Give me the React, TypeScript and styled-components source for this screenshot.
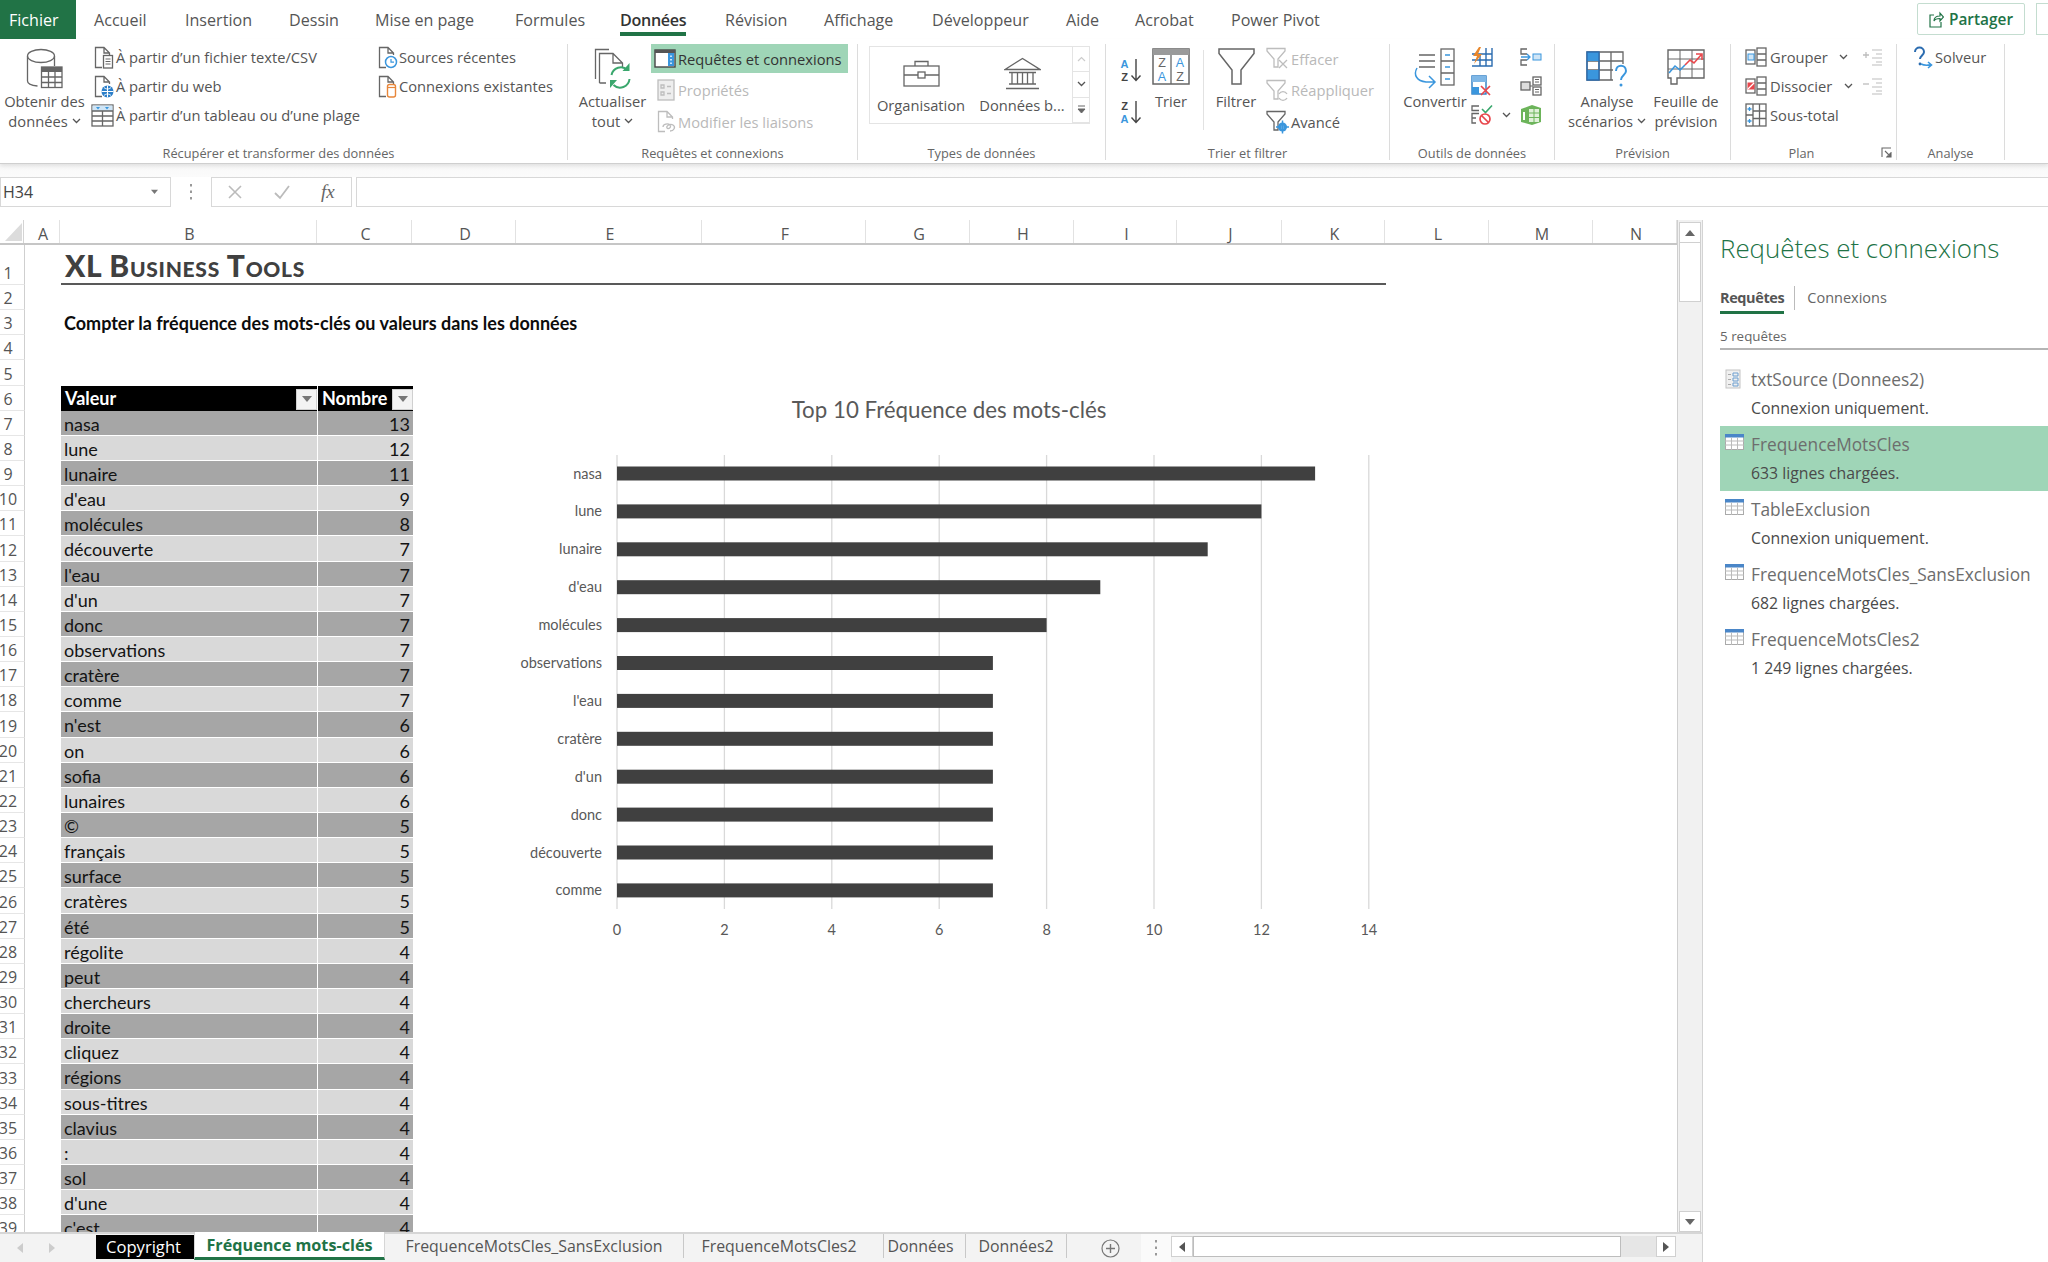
import React from 'react';
import styled, { createGlobalStyle } from 'styled-components';

const UI = '"Open Sans", "Noto Sans", "Liberation Sans", sans-serif';
const SHEET = 'Lato, "Liberation Sans", sans-serif';
const GREEN = '#217346';
const INK = '#666';
const DIM = '#bdbdbd';
const BLUE = '#3a96dd';
const RED = '#e8474c';

const GlobalStyle = createGlobalStyle`
  html, body { margin: 0; padding: 0; background: #fff; }
  * { box-sizing: border-box; }
`;

const Page = styled.div`
  width: 2048px;
  height: 1262px;
  overflow: hidden;
  display: flex;
  flex-direction: column;
  font-family: ${UI};
  color: #444;
  background: #fff;
`;

/* ---------- menu tabs ---------- */

const TabBar = styled.div`
  height: 39px;
  display: flex;
  align-items: flex-start;
  font-size: 16.1px;
  color: #555;
`;

const FileTab = styled.div`
  width: 76px;
  height: 39px;
  margin-right: 18px;
  padding-left: 9px;
  background: ${GREEN};
  color: #fff;
  display: flex;
  align-items: center;
`;

const Tab = styled.div<{ $w: number }>`
  width: ${p => p.$w}px;
  flex-shrink: 0;
`;

const TabLabel = styled.span<{ $active?: boolean }>`
  display: inline-block;
  height: 36px;
  line-height: 40px;
  white-space: nowrap;
  color: ${p => (p.$active ? '#333' : '#555')};
  font-weight: ${p => (p.$active ? 600 : 400)};
  letter-spacing: ${p => (p.$active ? '-0.3px' : '0')};
  border-bottom: 4px solid ${p => (p.$active ? GREEN : 'transparent')};
`;

const ShareButton = styled.div`
  margin: 3px 0 0 auto;
  width: 108px;
  height: 32px;
  border: 1px solid #c4ddd0;
  border-radius: 2px;
  display: flex;
  align-items: center;
  justify-content: center;
  gap: 5px;
  font-weight: 600;
  font-size: 15.4px;
  color: ${GREEN};
`;

const ExtraButton = styled.div`
  margin: 3px -4px 0 11px;
  width: 16px;
  height: 32px;
  flex-shrink: 0;
  border: 1px solid #c4ddd0;
`;

/* ---------- ribbon ---------- */

const Ribbon = styled.div`
  height: 124px;
  padding: 5px 0 3px;
  display: flex;
  background: #fff;
  box-shadow: 0 1px 0 #cfcfcf, 0 3px 4px rgba(0, 0, 0, 0.1);
  position: relative;
  font-size: 14.7px;
  color: #555;
`;

const Group = styled.section<{ $w: number }>`
  width: ${p => p.$w}px;
  flex-shrink: 0;
  display: flex;
  flex-direction: column;
  border-right: 1px solid #dcdcdc;
  position: relative;
`;

const GroupBody = styled.div<{ $pl?: number }>`
  flex: 1;
  display: flex;
  padding-left: ${p => p.$pl ?? 0}px;
  min-height: 0;
`;

const GroupFoot = styled.div<{ $pr?: number }>`
  height: 14px;
  line-height: 14px;
  text-align: center;
  font-size: 12.8px;
  color: #666;
  padding-right: ${p => p.$pr ?? 0}px;
  white-space: nowrap;
`;

const Launcher = styled.span`
  position: absolute;
  right: 4px;
  bottom: 2px;
  display: flex;
`;

const BigButton = styled.div<{ $w: number; $ml?: number }>`
  width: ${p => p.$w}px;
  margin-left: ${p => p.$ml ?? 0}px;
  flex-shrink: 0;
  display: flex;
  flex-direction: column;
  align-items: center;
  line-height: 20px;
  white-space: nowrap;
  text-align: center;
`;

const BigIcon = styled.div<{ $pt?: number }>`
  height: 47px;
  padding-top: ${p => p.$pt ?? 4}px;
  display: flex;
  justify-content: center;
`;

const ButtonLine = styled.div`
  display: flex;
  align-items: center;
  gap: 4px;
`;

const SmallColumn = styled.div<{ $w?: number; $gap?: number; $ml?: number; $mt?: number }>`
  ${p => (p.$w ? `width: ${p.$w}px;` : '')}
  flex-shrink: 0;
  margin-left: ${p => p.$ml ?? 0}px;
  margin-top: ${p => p.$mt ?? 0}px;
  display: flex;
  flex-direction: column;
  gap: ${p => p.$gap ?? 0}px;
`;

const SmallButton = styled.div<{ $on?: boolean; $off?: boolean }>`
  height: 29px;
  display: flex;
  align-items: center;
  white-space: nowrap;
  background: ${p => (p.$on ? '#9fd5b7' : 'transparent')};
  color: ${p => (p.$on ? '#333' : p.$off ? '#b9b9b9' : '#555')};
`;

const IconSlot = styled.span<{ $w: number; $pl?: number }>`
  width: ${p => p.$w}px;
  padding-left: ${p => p.$pl ?? 0}px;
  flex-shrink: 0;
  display: flex;
  align-items: center;
`;

const Gallery = styled.div`
  width: 221px;
  height: 78px;
  margin-top: 2px;
  display: flex;
  border: 1px solid #e4e4e4;
  border-right: none;
`;

const GalleryItem = styled.div<{ $w: number }>`
  width: ${p => p.$w}px;
  display: flex;
  flex-direction: column;
  align-items: center;
  white-space: nowrap;
`;

const GalleryIcon = styled.div`
  height: 48px;
  display: flex;
  align-items: center;
  padding-top: 5px;
`;

const GalleryScroll = styled.div`
  width: 18px;
  margin-left: auto;
  display: flex;
  flex-direction: column;
`;

const GalleryArrow = styled.div`
  flex: 1;
  display: flex;
  align-items: center;
  justify-content: center;
  border: 1px solid #e4e4e4;
  border-width: 0 1px 1px 1px;
`;

const SortColumn = styled.div`
  width: 24px;
  padding-top: 14px;
  display: flex;
  flex-direction: column;
  gap: 17px;
`;

const ToolDivider = styled.div`
  width: 1px;
  height: 80px;
  margin: 6px 5px 0 7px;
  background: #e2e2e2;
  flex-shrink: 0;
`;

const IconColumn = styled.div<{ $ml: number; $w: number }>`
  width: ${p => p.$w}px;
  margin-left: ${p => p.$ml}px;
  margin-top: -2px;
  flex-shrink: 0;
  display: flex;
  flex-direction: column;
`;

const IconCell = styled.div`
  height: 29px;
  display: flex;
  align-items: center;
  gap: 9px;
`;

/* ---------- formula bar ---------- */

const FormulaArea = styled.div`
  height: 57px;
  padding: 14px 0 13px;
  display: flex;
  background: linear-gradient(#f8f8f8 0, #fbfbfb 14px, #fff 14px);
`;

const NameBox = styled.div`
  width: 171px;
  height: 30px;
  border: 1px solid #d8d8d8;
  background: #fff;
  padding: 0 12px 0 2px;
  display: flex;
  align-items: center;
  justify-content: space-between;
  font-size: 16px;
  color: #444;
`;

const FormulaDots = styled.div`
  width: 40px;
  display: flex;
  align-items: center;
  justify-content: center;
`;

const FormulaButtons = styled.div`
  width: 141px;
  height: 30px;
  border: 1px solid #d8d8d8;
  background: #fff;
  padding-left: 15px;
  display: flex;
  align-items: center;
  gap: 30px;
`;

const FxLabel = styled.span`
  font-family: "Liberation Serif", serif;
  font-style: italic;
  font-size: 19px;
  color: #666;
`;

const FormulaInput = styled.div`
  flex: 1;
  height: 30px;
  margin-left: 4px;
  border: 1px solid #d8d8d8;
  border-right: none;
  background: #fff;
`;

/* ---------- sheet ---------- */

const MainArea = styled.div`
  flex: 1;
  display: flex;
  min-height: 0;
`;

const Workbook = styled.div`
  width: 1703px;
  display: flex;
  flex-direction: column;
  border-right: 1px solid #d4d4d4;
`;

const SheetArea = styled.div`
  height: 1012px;
  display: flex;
`;

const GridPane = styled.div`
  width: 1678px;
  position: relative;
  overflow: hidden;
  border-right: 1px solid #cfcfcf;
  font-family: ${SHEET};
`;

const ColumnHeader = styled.div`
  height: 25px;
  display: flex;
  border-bottom: 2px solid #c6c6c6;
  font-family: ${UI};
  font-size: 16px;
  color: #555;
`;

const Corner = styled.div`
  width: 25px;
  display: flex;
  align-items: flex-end;
  padding: 0 0 2px 5px;
  border-right: 1px solid #d4d4d4;
`;

const ColumnCell = styled.div<{ $w: number }>`
  width: ${p => p.$w}px;
  flex-shrink: 0;
  padding-left: 3px;
  border-right: 1px solid #e2e2e2;
  text-align: center;
  line-height: 29px;
`;

const Row = styled.div<{ $h?: number }>`
  height: ${p => p.$h ?? 25.15}px;
  display: flex;
`;

const RowNumber = styled.div`
  width: 25px;
  flex-shrink: 0;
  padding-right: 8px;
  display: flex;
  align-items: flex-end;
  justify-content: center;
  border-right: 1px solid #cfcfcf;
  border-bottom: 1px solid #e6e6e6;
  font-family: ${UI};
  font-size: 16px;
  line-height: 22px;
  color: #555;
`;

const TitleCell = styled.div`
  width: 1325px;
  margin-left: 36px;
  padding: 0 0 0 4px;
  border-bottom: 2px solid #595959;
  font-weight: 900;
  font-variant: small-caps;
  font-size: 30px;
  letter-spacing: 0.7px;
  line-height: 41px;
  color: #404040;
  white-space: nowrap;
`;

const SubTitle = styled.div`
  margin-left: 39px;
  font-weight: 700;
  font-size: 18px;
  line-height: 27px;
  color: #0c0c0c;
  white-space: nowrap;
`;

const TableHead = styled.div<{ $w: number; $ml?: number }>`
  width: ${p => p.$w}px;
  margin-left: ${p => p.$ml ?? 0}px;
  padding-left: 4px;
  display: flex;
  align-items: center;
  justify-content: space-between;
  background: #000;
  color: #fff;
  font-weight: 700;
  font-size: 18px;
  line-height: 27px;
  border-right: 1px solid #fff;
  white-space: nowrap;
`;

const FilterButton = styled.span`
  width: 21px;
  height: 21px;
  margin-top: 2px;
  background: #f3f3f3;
  border: 1px solid #d0d0d0;
  display: flex;
  align-items: center;
  justify-content: center;
`;

const DataCell = styled.div<{ $w: number; $ml?: number; $dark: boolean; $right?: boolean }>`
  width: ${p => p.$w}px;
  margin-left: ${p => p.$ml ?? 0}px;
  padding: 0 3px;
  background: ${p => (p.$dark ? '#a6a6a6' : '#d9d9d9')};
  border-right: 1px solid #fff;
  border-bottom: 1px solid #fff;
  text-align: ${p => (p.$right ? 'right' : 'left')};
  font-size: 18px;
  line-height: 27px;
  color: #141414;
  white-space: nowrap;
`;

const ChartLayer = styled.svg`
  position: absolute;
  left: 480px;
  top: 160px;
  display: block;
`;

const ChartTitle = styled.text`
  font-family: ${SHEET};
  font-size: 22.3px;
  fill: #595959;
`;

const ChartLabel = styled.text`
  font-family: ${SHEET};
  font-size: 14.5px;
  fill: #595959;
`;

const VScroll = styled.div`
  width: 24px;
  padding: 2px 1px 0;
  background: #f1f1f1;
  display: flex;
  flex-direction: column;
`;

const ScrollButton = styled.div`
  height: 21px;
  background: #fff;
  border: 1px solid #d0d0d0;
  display: flex;
  align-items: center;
  justify-content: center;
`;

const VThumb = styled.div`
  height: 59px;
  background: #fff;
  border: 1px solid #d0d0d0;
  border-top: none;
`;

const VTrack = styled.div`
  flex: 1;
`;

/* ---------- sheet tabs ---------- */

const SheetTabs = styled.div`
  height: 30px;
  display: flex;
  align-items: flex-start;
  background: #f3f3f3;
  border-top: 2px solid #d6d6d6;
  font-size: 15.9px;
  color: #555;
`;

const TabNav = styled.div`
  width: 96px;
  height: 28px;
  padding-left: 16px;
  display: flex;
  align-items: center;
  gap: 24px;
`;

const BlackTab = styled.div`
  width: 98px;
  height: 24px;
  margin-top: 1px;
  padding: 0 3px 2px 0;
  background: #000;
  color: #fff;
  font-size: 16.6px;
  display: flex;
  align-items: center;
  justify-content: center;
`;

const ActiveSheetTab = styled.div`
  width: 191px;
  height: 28px;
  margin-top: -2px;
  background: #fff;
  border-bottom: 3px solid ${GREEN};
  border-left: 1px solid #d6d6d6;
  border-right: 1px solid #d6d6d6;
  color: ${GREEN};
  font-weight: 700;
  font-size: 16.2px;
  white-space: nowrap;
  display: flex;
  align-items: center;
  justify-content: center;
`;

const SheetTab = styled.div<{ $w: number; $pr?: number }>`
  width: ${p => p.$w}px;
  height: 24px;
  padding-right: ${p => p.$pr ?? 0}px;
  border-right: 1px solid #c8c8c8;
  display: flex;
  align-items: center;
  justify-content: center;
  white-space: nowrap;
`;

const AddSheet = styled.div`
  margin-left: 34px;
  width: 20px;
  height: 28px;
  display: flex;
  align-items: center;
`;

const ScrollSplit = styled.div`
  width: 30px;
  height: 28px;
  margin-left: 20px;
  background: #fafafa;
  display: flex;
  align-items: center;
  justify-content: center;
`;

const HScroll = styled.div`
  width: 505px;
  height: 21px;
  margin-top: 2px;
  display: flex;
`;

const HButton = styled.div<{ $w: number }>`
  width: ${p => p.$w}px;
  background: #fff;
  border: 1px solid #d0d0d0;
  display: flex;
  align-items: center;
  justify-content: center;
`;

const HThumb = styled.div`
  width: 428px;
  background: #fff;
  border: 1px solid #bdbdbd;
`;

const HTrack = styled.div`
  flex: 1;
  background: #e6e6e6;
`;

/* ---------- query panel ---------- */

const Panel = styled.aside`
  flex: 1;
  padding: 11px 0 0 17px;
  background: #fff;
`;

const PanelTitle = styled.div`
  font-weight: 300;
  font-size: 25.9px;
  line-height: 34px;
  color: ${GREEN};
  white-space: nowrap;
`;

const PanelTabs = styled.div`
  height: 42px;
  margin-top: 19px;
  display: flex;
  font-size: 14.5px;
  color: #666;
`;

const PanelTab = styled.div<{ $active?: boolean }>`
  height: 30px;
  line-height: 28px;
  font-weight: ${p => (p.$active ? 700 : 400)};
  letter-spacing: ${p => (p.$active ? '-0.4px' : '0')};
  color: ${p => (p.$active ? '#555' : '#666')};
  border-bottom: ${p => (p.$active ? `3px solid ${GREEN}` : 'none')};
`;

const PanelTabDivider = styled.div`
  width: 1px;
  height: 24px;
  margin: 2px 12px 0 10px;
  background: #bbb;
`;

const QueryCount = styled.div`
  height: 24px;
  font-size: 13.4px;
  line-height: 20px;
  color: #666;
  border-bottom: 2px solid #b5b5b5;
`;

const QueryList = styled.div`
  margin-top: 11px;
`;

const QueryItem = styled.div<{ $on?: boolean }>`
  height: 65px;
  padding: 5px 0 0 5px;
  display: grid;
  grid-template-columns: 26px 1fr;
  background: ${p => (p.$on ? '#9fd5b7' : 'transparent')};
`;

const QueryIcon = styled.div`
  padding-top: 3px;
`;

const QueryName = styled.div`
  font-size: 17.3px;
  line-height: 28px;
  color: #6d6d6d;
  white-space: nowrap;
`;

const QueryNote = styled.div`
  font-size: 15.8px;
  line-height: 28px;
  color: #4a4a4a;
  white-space: nowrap;
`;

/* ---------- icons ---------- */

const Svg = styled.svg`
  display: block;
  flex-shrink: 0;
`;

const Chevron = ({ color = '#555' }: { color?: string }) => (
  <Svg width="9" height="6" viewBox="0 0 9 6">
    <path d="M1 1l3.5 3.5L8 1" fill="none" stroke={color} strokeWidth="1.3" />
  </Svg>
);

const Triangle = ({ dir, color = '#666', size = 1 }: { dir: 'up' | 'down' | 'left' | 'right'; color?: string; size?: number }) => {
  const d = { up: 'M0 7L5 1L10 7Z', down: 'M0 1H10L5 7Z', left: 'M7 0V10L1 5Z', right: 'M1 0V10L7 5Z' }[dir];
  const flat = dir === 'up' || dir === 'down';
  return (
    <Svg width={(flat ? 10 : 8) * size} height={(flat ? 8 : 10) * size} viewBox={flat ? '0 0 10 8' : '0 0 8 10'}>
      <path d={d} fill={color} />
    </Svg>
  );
};

const VDots = () => (
  <Svg width="4" height="18" viewBox="0 0 4 18">
    <path d="M2 1v2.5M2 7.5v2.5M2 14v2.5" stroke="#999" strokeWidth="2" />
  </Svg>
);

const line = { fill: 'none', stroke: INK, strokeWidth: 1.3 };
const dim = { fill: 'none', stroke: DIM, strokeWidth: 1.3 };

const IconDatabase = () => (
  <Svg width="37" height="41" viewBox="0 0 37 41">
    <g {...line}>
      <ellipse cx="15" cy="8" rx="13.5" ry="6.5" />
      <path d="M1.5 8v25c0 2.5 4 4.5 10 5M28.5 8v10" />
      <rect x="15.5" y="19" width="20.5" height="20.5" fill="#fff" />
      <path d="M22.5 24v15M29 24v15M15.5 29h20.5M15.5 34.5h20.5" />
    </g>
    <rect x="15.5" y="19" width="20.5" height="5" fill={INK} />
  </Svg>
);

const PageShape = ({ s = line }: { s?: typeof line }) => (
  <path d="M8 21.5H1.5V1.5H10l5.5 5.5V9M10 1.5V7h5.5" {...s} />
);

const IconFileText = () => (
  <Svg width="20" height="23" viewBox="0 0 20 23">
    <PageShape />
    <rect x="9.5" y="9.5" width="9" height="12.5" fill="#fff" stroke={INK} strokeWidth="1.3" />
    <path d="M11.5 13h5M11.5 15.5h5M11.5 18h5" {...line} strokeWidth="1" />
  </Svg>
);

const IconFileWeb = () => (
  <Svg width="20" height="23" viewBox="0 0 20 23">
    <PageShape />
    <circle cx="13.5" cy="16.5" r="6" fill="#2c7fc9" />
    <path d="M7.5 16.5h12M13.5 10.5v12M10 12.5c2 2 5 2 7 0M10 20.5c2-2 5-2 7 0" fill="none" stroke="#fff" strokeWidth="1" />
  </Svg>
);

const IconTableRange = () => (
  <Svg width="23" height="23" viewBox="0 0 23 23">
    <rect x="1" y="1" width="21" height="21" {...line} />
    <rect x="1.5" y="1.5" width="20" height="5.5" fill="#cfe5f6" />
    <path d="M5 3h4L7 5.5zM14 3h4l-2 2.5z" fill={BLUE} />
    <path d="M1 7h21M1 12h21M1 17h21M11.5 7v15" {...line} />
  </Svg>
);

const IconFileRecent = () => (
  <Svg width="20" height="23" viewBox="0 0 20 23">
    <PageShape />
    <circle cx="13" cy="16" r="5.5" fill="#fff" stroke={BLUE} strokeWidth="1.5" />
    <path d="M13 13v3.2h3" fill="none" stroke={BLUE} strokeWidth="1.2" />
  </Svg>
);

const IconFileLink = () => (
  <Svg width="20" height="23" viewBox="0 0 20 23">
    <PageShape />
    <rect x="9.5" y="9.5" width="8" height="12.5" rx="2" fill="#fff" stroke="#e8873a" strokeWidth="1.4" />
    <path d="M9.5 12.5h8" stroke="#e8873a" strokeWidth="1.2" />
  </Svg>
);

const IconRefreshAll = () => (
  <Svg width="37" height="41" viewBox="0 0 37 41">
    <path d="M1.5 31V1.5H15M5.5 35V5.5H19l9.5 9.5v4M19 5.5V15h9.5M5.5 35H12" {...line} />
    <g fill="none" stroke="#3aa76d" strokeWidth="2">
      <path d="M17.5 27a9.5 9.5 0 0 1 16-5" />
      <path d="M35.5 31a9.5 9.5 0 0 1-16 6" />
    </g>
    <path d="M35.5 15v8h-7zM16 40v-8h7z" fill="#3aa76d" />
  </Svg>
);

const IconQueryPane = () => (
  <Svg width="22" height="19" viewBox="0 0 22 19">
    <rect x="1" y="1" width="20" height="17" fill="#fff" stroke="#444" strokeWidth="1.4" />
    <rect x="1" y="1" width="20" height="3" fill="#555" />
    <rect x="14" y="4" width="6" height="13" fill={BLUE} />
    <path d="M17 6.5v1.5M17 10v1.5M17 13.5v1.5" stroke="#fff" strokeWidth="1.5" />
  </Svg>
);

const IconProperties = () => (
  <Svg width="18" height="22" viewBox="0 0 18 22">
    <rect x="1" y="1" width="16" height="20" fill="#eee" stroke={DIM} strokeWidth="1.3" />
    <path d="M4 6h3v3H4zM4 13h3v3H4zM10 7.5h4M10 14.5h4" {...dim} />
  </Svg>
);

const IconEditLinks = () => (
  <Svg width="20" height="23" viewBox="0 0 20 23">
    <PageShape s={dim} />
    <path d="M6 17c0-3 5-4 7-2s-2 5-3 3 3-5 6-3 1 6-3 6" {...dim} />
  </Svg>
);

const IconBriefcase = () => (
  <Svg width="37" height="27" viewBox="0 0 37 27">
    <g {...line}>
      <rect x="1" y="6" width="35" height="20" />
      <path d="M12 6V1.5h13V6M1 15h14M22 15h14" />
      <rect x="15" y="12" width="7" height="6" />
    </g>
  </Svg>
);

const IconBank = () => (
  <Svg width="37" height="33" viewBox="0 0 37 33">
    <g {...line}>
      <path d="M1 12.5L18.5 1.5 36 12.5zM5 15.5h27M5 27h27M2 31.5h33" />
      <path d="M8 15.5V27M13.5 15.5V27M18.5 15.5V27M23.5 15.5V27M29 15.5V27" />
    </g>
  </Svg>
);

const glyph = { fontFamily: '"Liberation Sans", sans-serif', textAnchor: 'middle' as const };

const IconSort = ({ top, bottom }: { top: string; bottom: string }) => (
  <Svg width="23" height="25" viewBox="0 0 23 25">
    <text x="5.5" y="10" fontSize="11" fontWeight="700" fill={top === 'A' ? BLUE : '#444'} {...glyph}>{top}</text>
    <text x="5.5" y="22.6" fontSize="11" fontWeight="700" fill={bottom === 'A' ? BLUE : '#444'} {...glyph}>{bottom}</text>
    <path d="M17 1v21M12.5 17.5L17 22.5l4.5-5" fill="none" stroke="#444" strokeWidth="1.4" />
  </Svg>
);

const IconSortDialog = () => (
  <Svg width="38" height="37" viewBox="0 0 38 37">
    <rect x="1" y="1" width="36" height="35" {...line} strokeWidth="1.5" />
    <rect x="1" y="1" width="36" height="6" fill="#9a9a9a" />
    <path d="M19 7v29" {...line} />
    <text x="10" y="18.5" fontSize="12.5" fill="#666" {...glyph}>Z</text>
    <text x="10" y="32.5" fontSize="12.5" fill={BLUE} {...glyph}>A</text>
    <text x="28" y="18.5" fontSize="12.5" fill={BLUE} {...glyph}>A</text>
    <text x="28" y="32.5" fontSize="12.5" fill="#666" {...glyph}>Z</text>
  </Svg>
);

const IconFunnel = () => (
  <Svg width="37" height="37" viewBox="0 0 37 37">
    <path d="M1 1h35v4.5L23 22v14h-9V22L1 5.5z" {...line} strokeWidth="1.5" />
  </Svg>
);

const SmallFunnel = ({ s = dim }: { s?: typeof line }) => (
  <path d="M1 1.5h18v2.5L12 12v8H8V12L1 4z" {...s} />
);

const IconFilterClear = () => (
  <Svg width="24" height="23" viewBox="0 0 24 23">
    <SmallFunnel />
    <path d="M13 13l8 8M21 13l-8 8" {...dim} />
  </Svg>
);

const IconFilterReapply = () => (
  <Svg width="24" height="23" viewBox="0 0 24 23">
    <SmallFunnel />
    <path d="M13 15a4.5 4.5 0 0 1 8 0M21 19a4.5 4.5 0 0 1-8 0" {...dim} />
  </Svg>
);

const IconFilterAdvanced = () => (
  <Svg width="24" height="24" viewBox="0 0 24 24">
    <SmallFunnel s={line} />
    <circle cx="16.5" cy="17" r="4.5" fill={BLUE} />
    <circle cx="16.5" cy="17" r="1.5" fill="#fff" />
    <path d="M16.5 10.5v13M10 17h13" stroke={BLUE} strokeWidth="1.5" />
  </Svg>
);

const IconConvert = () => (
  <Svg width="44" height="42" viewBox="0 0 44 42">
    <path d="M6 7h16M6 13h16M6 19h16" {...line} />
    <rect x="28" y="1" width="13" height="36" {...line} />
    <path d="M28 13h13M28 25h13" {...line} />
    <path d="M32 7h5M32 19h5M32 31h5" stroke={BLUE} strokeWidth="1.6" />
    <path d="M4 20c-4 7 0 13 9 14h8M16 28l6 6-6 6" fill="none" stroke={BLUE} strokeWidth="1.5" />
  </Svg>
);

const IconFlashFill = () => (
  <Svg width="22" height="20" viewBox="0 0 22 20">
    <path d="M1 19h20V1M9 7v12M15 1v18M1 13h20M1 7h20" fill="none" stroke="#2b6cb0" strokeWidth="1.4" />
    <path d="M8 0L2 9h4l-3 8 8-10H7l3-7z" fill="#e8872c" />
  </Svg>
);

const IconRemoveDup = () => (
  <Svg width="22" height="21" viewBox="0 0 22 21">
    <rect x="1" y="1" width="14" height="18" fill="#fff" stroke="#2b7cc4" strokeWidth="1.4" />
    <rect x="1" y="1" width="14" height="6" fill="#7fb7e6" />
    <rect x="1" y="12" width="7" height="7" fill={BLUE} />
    <path d="M10 11l9 9M19 11l-9 9" stroke={RED} strokeWidth="1.7" />
  </Svg>
);

const IconValidate = () => (
  <Svg width="22" height="21" viewBox="0 0 22 21">
    <path d="M8 2H1v4.5h7M8 9.5H1v4.5h4M1 14v5h4" {...line} />
    <path d="M11 5l3.5 3.5L21 1.500" fill="none" stroke="#3aa76d" strokeWidth="1.6" />
    <circle cx="14" cy="15" r="5" fill="#fff" stroke={RED} strokeWidth="1.7" />
    <path d="M10.5 11.5l7 7" stroke={RED} strokeWidth="1.7" />
  </Svg>
);

const IconConsolidate = () => (
  <Svg width="22" height="18" viewBox="0 0 22 18">
    <path d="M7 1H1v5h6M7 12H1v5h6" {...line} />
    <path d="M1 9h9M7 6l3 3-3 3" fill="none" stroke={BLUE} strokeWidth="1.3" />
    <rect x="13" y="6" width="8" height="6" fill="#cfe5f6" stroke={BLUE} />
  </Svg>
);

const IconRelations = () => (
  <Svg width="22" height="20" viewBox="0 0 22 20">
    <rect x="1" y="6" width="9" height="8" fill="#ddd" stroke={INK} strokeWidth="1.3" />
    <rect x="13" y="1" width="8" height="8" {...line} />
    <rect x="13" y="11" width="8" height="8" {...line} />
    <path d="M10 10h3M15 3.5h4M15 6h4M15 13.5h4M15 16h4" {...line} strokeWidth="1" />
  </Svg>
);

const IconPowerPivot = () => (
  <Svg width="22" height="22" viewBox="0 0 22 22">
    <path d="M1 5l11-4 9 3v14l-9 3-11-3z" fill="#6cb45a" />
    <rect x="9" y="5" width="10" height="13" fill="#dff0d8" />
    <path d="M14 5v13M9 9h10M9 13.5h10" stroke="#6cb45a" strokeWidth="1" />
    <path d="M4 8v8" stroke="#fff" strokeWidth="2" />
  </Svg>
);

const IconScenario = () => (
  <Svg width="42" height="37" viewBox="0 0 42 37">
    <path d="M1 1h36v28H1zM13 1v28M25 1v28M1 10h36M1 19h36" {...line} />
    <rect x="1" y="1" width="12" height="9" fill={BLUE} />
    <rect x="1" y="19" width="12" height="10" fill={BLUE} />
    <path d="M1 1h12v28H1z" fill="none" stroke="#2b6cb0" strokeWidth="1.4" />
    <rect x="27" y="13" width="15" height="24" fill="#fff" />
    <path d="M30 20c0-7 10-7 10 0 0 4-5 4-5 9" fill="none" stroke={BLUE} strokeWidth="2" />
    <circle cx="35" cy="34" r="1.5" fill={BLUE} />
  </Svg>
);

const IconForecast = () => (
  <Svg width="38" height="37" viewBox="0 0 38 37">
    <path d="M10 35H4v-6l-3 0V1h36v28H10z" {...line} strokeWidth="1.4" />
    <path d="M1 10h36M1 20h36M13 1v28M25 1v28" {...line} strokeWidth="1" />
    <path d="M2 24l6-7 5 4 5-5" fill="none" stroke={BLUE} strokeWidth="1.6" />
    <path d="M18 16l5-5 4 3 7-8M29 5h6v6" fill="none" stroke={RED} strokeWidth="1.6" />
  </Svg>
);

const Outline = ({ fill, stroke, mark }: { fill: string; stroke: string; mark?: boolean }) => (
  <>
    <rect x="1" y="3" width="9" height="14" {...line} />
    <rect x="3" y="7" width="6" height="6" fill={fill} stroke={stroke} />
    {mark && <path d="M3 13l6-6" stroke="#fff" strokeWidth="1.2" />}
    <rect x="12" y="1" width="9" height="18" {...line} />
    <path d="M12 7h9M12 13h9" {...line} />
  </>
);

const IconGroup = () => (
  <Svg width="22" height="20" viewBox="0 0 22 20">
    <Outline fill="#cfe5f6" stroke={BLUE} />
  </Svg>
);

const IconUngroup = () => (
  <Svg width="22" height="20" viewBox="0 0 22 20">
    <Outline fill={RED} stroke={RED} mark />
  </Svg>
);

const IconSubtotal = () => (
  <Svg width="22" height="24" viewBox="0 0 22 24">
    <rect x="1" y="1" width="20" height="22" {...line} />
    <path d="M8 1v22M14.5 1v22M8 8h13M8 15.5h13M1 12h7" {...line} />
    <path d="M2.5 6h4M4.5 4v4M2.5 18h4M4.5 16v4" stroke={BLUE} strokeWidth="1.3" />
  </Svg>
);

const IconDetail = ({ plus }: { plus?: boolean }) => (
  <Svg width="21" height="18" viewBox="0 0 21 18">
    <path d={plus ? 'M1 7h6M4 4v6' : 'M1 7h6'} {...dim} />
    <path d="M10 2h10M14 6h6M10 10h10M14 14h6M10 17h10" {...dim} strokeWidth="1" />
  </Svg>
);

const IconSolver = () => (
  <Svg width="20" height="23" viewBox="0 0 20 23">
    <path d="M2 6c0-6 9-6 9 0 0 3-4 4-4 7" fill="none" stroke="#2b6cb0" strokeWidth="2" />
    <circle cx="7" cy="18" r="1.4" fill="#2b6cb0" />
    <path d="M8 18c4 2 6 1 10 1M15 16l3.5 3-3.5 3" fill="none" stroke={BLUE} strokeWidth="1.6" />
  </Svg>
);

const IconShare = () => (
  <Svg width="15" height="17" viewBox="0 0 15 17">
    <path d="M5 4H1v12h11v-5M5 10c0-3 2-5 6-5V2l3.5 4-3.5 4V7.5C8 7.5 6 8 5 10z" fill="none" stroke={GREEN} strokeWidth="1.2" />
  </Svg>
);

const IconLauncher = () => (
  <Svg width="11" height="11" viewBox="0 0 11 11">
    <path d="M1 10V1h9M10 5v5H5M4 4l5 5M9 6v3H6" fill="none" stroke="#666" strokeWidth="1.1" />
  </Svg>
);

const IconCross = () => (
  <Svg width="16" height="16" viewBox="0 0 16 16">
    <path d="M2 2l12 12M14 2L2 14" stroke="#bbb" strokeWidth="1.6" />
  </Svg>
);

const IconCheck = () => (
  <Svg width="18" height="16" viewBox="0 0 18 16">
    <path d="M2 9l5 5L16 2" fill="none" stroke="#bbb" strokeWidth="1.8" />
  </Svg>
);

const IconCorner = () => (
  <Svg width="17" height="18" viewBox="0 0 17 18">
    <path d="M17 0V18H0z" fill="#dcdcdc" />
  </Svg>
);

const IconAddSheet = () => (
  <Svg width="19" height="19" viewBox="0 0 19 19">
    <circle cx="9.5" cy="9.5" r="8.5" fill="none" stroke="#777" strokeWidth="1.2" />
    <path d="M5 9.5h9M9.5 5v9" stroke="#777" strokeWidth="1.4" />
  </Svg>
);

const IconConnection = () => (
  <Svg width="16" height="20" viewBox="0 0 16 20">
    <rect x="1" y="1" width="14" height="18" fill="#f0f0f0" stroke="#c4c4c4" />
    <path d="M8 4h5v3H8zM8 9h5v3H8zM8 14h5v3H8z" fill="none" stroke="#6d9fd0" />
    <path d="M3 5.5h3M3 10.5h3M3 15.5h3" stroke="#aaa" />
  </Svg>
);

const IconTable = () => (
  <Svg width="19" height="16" viewBox="0 0 19 16">
    <rect x="0.5" y="0.5" width="18" height="15" fill="#fff" stroke="#aaa" />
    <rect x="0" y="0" width="19" height="3.5" fill="#4a86c8" />
    <path d="M0 7h19M0 11h19M6.5 3.5V16M12.5 3.5V16" stroke="#bbb" />
  </Svg>
);

/* ---------- data ---------- */

const menuTabs: [string, number][] = [
  ['Accueil', 91], ['Insertion', 104], ['Dessin', 86], ['Mise en page', 140], ['Formules', 105],
  ['Données', 105], ['Révision', 99], ['Affichage', 108], ['Développeur', 134], ['Aide', 69],
  ['Acrobat', 96], ['Power Pivot', 120],
];

const columns: [string, number][] = [
  ['A', 36], ['B', 257], ['C', 95], ['D', 104], ['E', 186], ['F', 164], ['G', 104],
  ['H', 104], ['I', 103], ['J', 105], ['K', 103], ['L', 104], ['M', 104], ['N', 84],
];

const rows: [string, number][] = [
  ['nasa', 13], ['lune', 12], ['lunaire', 11], ["d'eau", 9], ['molécules', 8], ['découverte', 7],
  ["l'eau", 7], ["d'un", 7], ['donc', 7], ['observations', 7], ['cratère', 7], ['comme', 7],
  ["n'est", 6], ['on', 6], ['sofia', 6], ['lunaires', 6], ['©', 5], ['français', 5], ['surface', 5],
  ['cratères', 5], ['été', 5], ['régolite', 4], ['peut', 4], ['chercheurs', 4], ['droite', 4],
  ['cliquez', 4], ['régions', 4], ['sous-titres', 4], ['clavius', 4], [':', 4], ['sol', 4],
  ["d'une", 4], ["c'est", 4],
];

const chartData: [string, number][] = [
  ['nasa', 13], ['lune', 12], ['lunaire', 11], ["d'eau", 9], ['molécules', 8], ['observations', 7],
  ["l'eau", 7], ['cratère', 7], ["d'un", 7], ['donc', 7], ['découverte', 7], ['comme', 7],
];

const queries = [
  { name: 'txtSource (Donnees2)', note: 'Connexion uniquement.', icon: <IconConnection /> },
  { name: 'FrequenceMotsCles', note: '633 lignes chargées.', icon: <IconTable />, on: true },
  { name: 'TableExclusion', note: 'Connexion uniquement.', icon: <IconTable /> },
  { name: 'FrequenceMotsCles_SansExclusion', note: '682 lignes chargées.', icon: <IconTable /> },
  { name: 'FrequenceMotsCles2', note: '1 249 lignes chargées.', icon: <IconTable /> },
];

const X0 = 617;
const UNIT = 53.7;

const Chart = () => (
  <ChartLayer width="920" height="580" viewBox="480 380 920 580">
    <ChartTitle x="949" y="418" textAnchor="middle">Top 10 Fréquence des mots-clés</ChartTitle>
    {[0, 2, 4, 6, 8, 10, 12, 14].map(t => (
      <g key={t}>
        <path d={`M${X0 + t * UNIT} 455V909`} stroke="#d9d9d9" strokeWidth="1.3" />
        <ChartLabel x={X0 + t * UNIT} y="935" textAnchor="middle">{t}</ChartLabel>
      </g>
    ))}
    {chartData.map(([label, value], i) => {
      const cy = 473.5 + i * 37.9;
      return (
        <g key={label}>
          <rect x={X0} y={cy - 7} width={value * UNIT} height="14" fill="#404040" />
          <ChartLabel x="602" y={cy + 5} textAnchor="end">{label}</ChartLabel>
        </g>
      );
    })}
  </ChartLayer>
);

const Sheet = () => (
  <GridPane>
    <ColumnHeader>
      <Corner><IconCorner /></Corner>
      {columns.map(([c, w]) => <ColumnCell key={c} $w={w}>{c}</ColumnCell>)}
    </ColumnHeader>
    <Row $h={40}>
      <RowNumber>1</RowNumber>
      <TitleCell>XL Business Tools</TitleCell>
    </Row>
    <Row><RowNumber>2</RowNumber></Row>
    <Row>
      <RowNumber>3</RowNumber>
      <SubTitle>Compter la fréquence des mots-clés ou valeurs dans les données</SubTitle>
    </Row>
    <Row><RowNumber>4</RowNumber></Row>
    <Row><RowNumber>5</RowNumber></Row>
    <Row>
      <RowNumber>6</RowNumber>
      <TableHead $w={257} $ml={36}>Valeur<FilterButton><Triangle dir="down" color="#777" /></FilterButton></TableHead>
      <TableHead $w={96}>Nombre<FilterButton><Triangle dir="down" color="#777" /></FilterButton></TableHead>
    </Row>
    {rows.map(([word, count], i) => (
      <Row key={i}>
        <RowNumber>{i + 7}</RowNumber>
        <DataCell $w={257} $ml={36} $dark={i % 2 === 0}>{word}</DataCell>
        <DataCell $w={96} $dark={i % 2 === 0} $right>{count}</DataCell>
      </Row>
    ))}
    <Chart />
  </GridPane>
);

export default function App() {
  return (
    <Page>
      <GlobalStyle />
      <TabBar>
        <FileTab>Fichier</FileTab>
        {menuTabs.map(([t, w]) => (
          <Tab key={t} $w={w}><TabLabel $active={t === 'Données'}>{t}</TabLabel></Tab>
        ))}
        <ShareButton><IconShare />Partager</ShareButton>
        <ExtraButton />
      </TabBar>

      <Ribbon>
        <Group $w={568}>
          <GroupBody $pl={4}>
            <BigButton $w={81}>
              <BigIcon><IconDatabase /></BigIcon>
              <div>Obtenir des</div>
              <ButtonLine>données <Chevron /></ButtonLine>
            </BigButton>
            <SmallColumn $w={287} $ml={6} $mt={-1.5}>
              <SmallButton><IconSlot $w={25} $pl={3}><IconFileText /></IconSlot>À partir d’un fichier texte/CSV</SmallButton>
              <SmallButton><IconSlot $w={25} $pl={3}><IconFileWeb /></IconSlot>À partir du web</SmallButton>
              <SmallButton><IconSlot $w={25}><IconTableRange /></IconSlot>À partir d’un tableau ou d’une plage</SmallButton>
            </SmallColumn>
            <SmallColumn $mt={-1.5}>
              <SmallButton><IconSlot $w={21}><IconFileRecent /></IconSlot>Sources récentes</SmallButton>
              <SmallButton><IconSlot $w={21}><IconFileLink /></IconSlot>Connexions existantes</SmallButton>
            </SmallColumn>
          </GroupBody>
          <GroupFoot $pr={10}>Récupérer et transformer des données</GroupFoot>
        </Group>

        <Group $w={290}>
          <GroupBody $pl={6}>
            <BigButton $w={77}>
              <BigIcon><IconRefreshAll /></BigIcon>
              <div>Actualiser</div>
              <ButtonLine>tout <Chevron /></ButtonLine>
            </BigButton>
            <SmallColumn $w={197} $gap={2.5}>
              <SmallButton $on><IconSlot $w={27} $pl={3}><IconQueryPane /></IconSlot>Requêtes et connexions</SmallButton>
              <SmallButton $off><IconSlot $w={27} $pl={6}><IconProperties /></IconSlot>Propriétés</SmallButton>
              <SmallButton $off><IconSlot $w={27} $pl={6}><IconEditLinks /></IconSlot>Modifier les liaisons</SmallButton>
            </SmallColumn>
          </GroupBody>
          <GroupFoot>Requêtes et connexions</GroupFoot>
        </Group>

        <Group $w={248}>
          <GroupBody $pl={11}>
            <Gallery>
              <GalleryItem $w={102}>
                <GalleryIcon><IconBriefcase /></GalleryIcon>
                Organisation
              </GalleryItem>
              <GalleryItem $w={100}>
                <GalleryIcon><IconBank /></GalleryIcon>
                Données b...
              </GalleryItem>
              <GalleryScroll>
                <GalleryArrow><Svg width="9" height="6" viewBox="0 0 9 6"><path d="M1 5l3.5-3.5L8 5" fill="none" stroke="#ccc" strokeWidth="1.2" /></Svg></GalleryArrow>
                <GalleryArrow><Chevron /></GalleryArrow>
                <GalleryArrow>
                  <Svg width="9" height="9" viewBox="0 0 9 9"><path d="M1 1h7M1 4l3.5 4L8 4z" fill="#666" stroke="#666" /></Svg>
                </GalleryArrow>
              </GalleryScroll>
            </Gallery>
          </GroupBody>
          <GroupFoot>Types de données</GroupFoot>
        </Group>

        <Group $w={284}>
          <GroupBody $pl={13}>
            <SortColumn>
              <IconSort top="A" bottom="Z" />
              <IconSort top="Z" bottom="A" />
            </SortColumn>
            <BigButton $w={50} $ml={3}>
              <BigIcon><IconSortDialog /></BigIcon>
              Trier
            </BigButton>
            <ToolDivider />
            <BigButton $w={54}>
              <BigIcon><IconFunnel /></BigIcon>
              Filtrer
            </BigButton>
            <SmallColumn $gap={2.5} $ml={3}>
              <SmallButton $off><IconSlot $w={25}><IconFilterClear /></IconSlot>Effacer</SmallButton>
              <SmallButton $off><IconSlot $w={25}><IconFilterReapply /></IconSlot>Réappliquer</SmallButton>
              <SmallButton><IconSlot $w={25}><IconFilterAdvanced /></IconSlot>Avancé</SmallButton>
            </SmallColumn>
          </GroupBody>
          <GroupFoot>Trier et filtrer</GroupFoot>
        </Group>

        <Group $w={165}>
          <GroupBody $pl={13}>
            <BigButton $w={64}>
              <BigIcon><IconConvert /></BigIcon>
              Convertir
            </BigButton>
            <IconColumn $ml={4} $w={49}>
              <IconCell><IconFlashFill /></IconCell>
              <IconCell><IconRemoveDup /></IconCell>
              <IconCell><IconValidate /><Chevron /></IconCell>
            </IconColumn>
            <IconColumn $ml={0} $w={22}>
              <IconCell><IconConsolidate /></IconCell>
              <IconCell><IconRelations /></IconCell>
              <IconCell><IconPowerPivot /></IconCell>
            </IconColumn>
          </GroupBody>
          <GroupFoot>Outils de données</GroupFoot>
        </Group>

        <Group $w={176}>
          <GroupBody $pl={7}>
            <BigButton $w={90}>
              <BigIcon $pt={7}><IconScenario /></BigIcon>
              <div>Analyse</div>
              <ButtonLine>scénarios <Chevron /></ButtonLine>
            </BigButton>
            <BigButton $w={68}>
              <BigIcon $pt={5}><IconForecast /></BigIcon>
              <div>Feuille de</div>
              <div>prévision</div>
            </BigButton>
          </GroupBody>
          <GroupFoot>Prévision</GroupFoot>
        </Group>

        <Group $w={166}>
          <GroupBody $pl={14}>
            <SmallColumn $w={117} $mt={-1.5}>
              <SmallButton><IconSlot $w={25}><IconGroup /></IconSlot>Grouper&nbsp;&nbsp;&nbsp;<Chevron /></SmallButton>
              <SmallButton><IconSlot $w={25}><IconUngroup /></IconSlot>Dissocier&nbsp;&nbsp;&nbsp;<Chevron /></SmallButton>
              <SmallButton><IconSlot $w={25}><IconSubtotal /></IconSlot>Sous-total</SmallButton>
            </SmallColumn>
            <IconColumn $ml={0} $w={22}>
              <IconCell><IconDetail plus /></IconCell>
              <IconCell><IconDetail /></IconCell>
            </IconColumn>
          </GroupBody>
          <GroupFoot $pr={24}>Plan</GroupFoot>
          <Launcher><IconLauncher /></Launcher>
        </Group>

        <Group $w={108}>
          <GroupBody $pl={16}>
            <SmallColumn $mt={-1.5}>
              <SmallButton><IconSlot $w={22}><IconSolver /></IconSlot>Solveur</SmallButton>
            </SmallColumn>
          </GroupBody>
          <GroupFoot>Analyse</GroupFoot>
        </Group>
      </Ribbon>

      <FormulaArea>
        <NameBox>H34<Triangle dir="down" color="#777" size={0.7} /></NameBox>
        <FormulaDots><VDots /></FormulaDots>
        <FormulaButtons>
          <IconCross />
          <IconCheck />
          <FxLabel>fx</FxLabel>
        </FormulaButtons>
        <FormulaInput />
      </FormulaArea>

      <MainArea>
        <Workbook>
          <SheetArea>
            <Sheet />
            <VScroll>
              <ScrollButton><Triangle dir="up" color="#666" /></ScrollButton>
              <VThumb />
              <VTrack />
              <ScrollButton><Triangle dir="down" color="#666" /></ScrollButton>
            </VScroll>
          </SheetArea>
          <SheetTabs>
            <TabNav>
              <Triangle dir="left" color="#ccc" />
              <Triangle dir="right" color="#ccc" />
            </TabNav>
            <BlackTab>Copyright</BlackTab>
            <ActiveSheetTab>Fréquence mots-clés</ActiveSheetTab>
            <SheetTab $w={299}>FrequenceMotsCles_SansExclusion</SheetTab>
            <SheetTab $w={200} $pr={9}>FrequenceMotsCles2</SheetTab>
            <SheetTab $w={82} $pr={8}>Données</SheetTab>
            <SheetTab $w={101}>Données2</SheetTab>
            <AddSheet><IconAddSheet /></AddSheet>
            <ScrollSplit><VDots /></ScrollSplit>
            <HScroll>
              <HButton $w={22}><Triangle dir="left" color="#555" /></HButton>
              <HThumb />
              <HTrack />
              <HButton $w={20}><Triangle dir="right" color="#555" /></HButton>
            </HScroll>
          </SheetTabs>
        </Workbook>

        <Panel>
          <PanelTitle>Requêtes et connexions</PanelTitle>
          <PanelTabs>
            <PanelTab $active>Requêtes</PanelTab>
            <PanelTabDivider />
            <PanelTab>Connexions</PanelTab>
          </PanelTabs>
          <QueryCount>5 requêtes</QueryCount>
          <QueryList>
            {queries.map(q => (
              <QueryItem key={q.name} $on={q.on}>
                <QueryIcon>{q.icon}</QueryIcon>
                <div>
                  <QueryName>{q.name}</QueryName>
                  <QueryNote>{q.note}</QueryNote>
                </div>
              </QueryItem>
            ))}
          </QueryList>
        </Panel>
      </MainArea>
    </Page>
  );
}
